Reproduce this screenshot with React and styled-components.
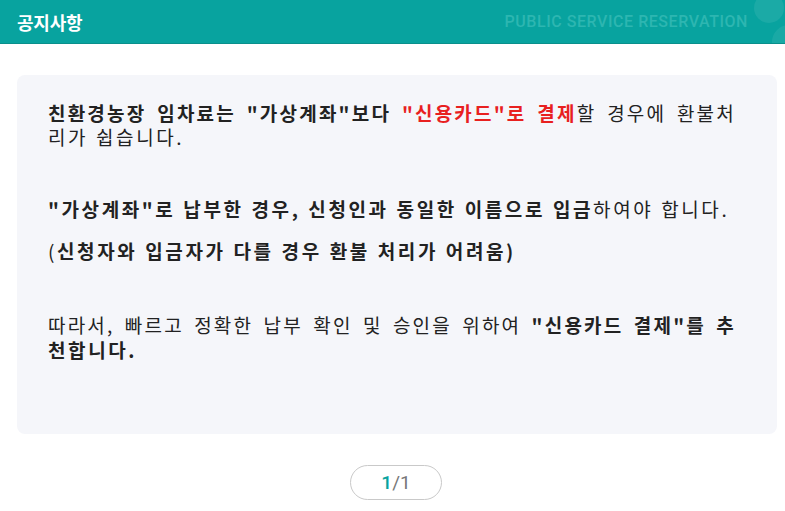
import React from 'react';
import styled, { createGlobalStyle } from 'styled-components';

const GlobalStyle = createGlobalStyle`
    html, body {
        margin: 0;
        padding: 0;
        background: #ffffff;
    }
    body {
        font-family: "Noto Sans CJK KR", "Noto Sans", sans-serif;
        color: #222;
    }
`

const Page = styled.div`
    width: 785px;
    height: 511px;
    overflow: hidden;
    display: flex;
    flex-direction: column;
`

const Header = styled.header`
    position: relative;
    height: 43px;
    background: #08a39f;
    border-bottom: 1px solid #0a8f8b;
    display: flex;
    align-items: center;
    justify-content: space-between;
    padding: 0 0 0 17px;
    overflow: hidden;
`

const Title = styled.h1`
    margin: 0;
    font-size: 18px;
    font-weight: 700;
    color: #ffffff;
    letter-spacing: -0.2px;
`

const Watermark = styled.span`
    font-family: Roboto, "Liberation Sans", sans-serif;
    font-size: 16px;
    font-weight: 500;
    color: #2db6b1;
    margin-right: 37px;
    letter-spacing: 0.55px;
`

const Blob = styled.svg`
    position: absolute;
    right: 0;
    top: 0;
`

const Body = styled.main`
    flex: 1;
    display: flex;
    flex-direction: column;
    align-items: center;
    padding: 31px 8px 0 17px;
`

const Card = styled.section`
    align-self: stretch;
    height: 359px;
    box-sizing: border-box;
    background: #f5f6fa;
    border-radius: 8px;
    padding: 26px 30px 0 31px;
    font-size: 19px;
    line-height: 24px;
    letter-spacing: 2.6px;
    word-spacing: 1px;
`

const Para = styled.p`
    margin: 0 0 ${p => p.gap || 0}px;
    line-height: ${p => p.lh || 24}px;
`

// a wrapped line that runs out to the right edge, as in the original justified text
const FullLine = styled.span`
    display: block;
    margin-right: 11px;
    text-align: justify;
    text-align-last: justify;
    letter-spacing: 2.2px;
`

const Strong = styled.b`
    font-weight: 700;
    color: ${p => (p.red ? '#e8201f' : '#222')};
`

const Pager = styled.div`
    margin-top: 31px;
    margin-left: -2px;
    width: 92px;
    height: 35px;
    box-sizing: border-box;
    border: 1px solid #c9c9c9;
    border-radius: 18px;
    display: flex;
    align-items: center;
    justify-content: center;
    font-family: Roboto, "Liberation Sans", sans-serif;
    font-size: 19px;
    color: #777;
`

const Current = styled.span`
    color: #08a39f;
    font-weight: 500;
`

function App() {
    return (
        <Page>
            <GlobalStyle />
            <Header>
                <Title>공지사항</Title>
                <Watermark>PUBLIC SERVICE RESERVATION</Watermark>
                <Blob width="60" height="44" viewBox="0 0 60 44">
                    <circle cx="44" cy="8" r="15" fill="#ffffff" opacity="0.08" />
                    <circle cx="64" cy="42" r="17" fill="#ffffff" opacity="0.07" />
                </Blob>
            </Header>
            <Body>
                <Card>
                    <Para gap={48}>
                        <FullLine>
                            <Strong>친환경농장 임차료는 "가상계좌"보다 </Strong>
                            <Strong red>"신용카드"로 결제</Strong>할 경우에 환불처
                        </FullLine>
                        리가 쉽습니다.
                    </Para>
                    <Para gap={18}>
                        <Strong>"가상계좌"로 납부한 경우, 신청인과 동일한 이름으로 입금</Strong>하여야 합니다.
                    </Para>
                    <Para gap={49}>
                        (<Strong>신청자와 입금자가 다를 경우 환불 처리가 어려움)</Strong>
                    </Para>
                    <Para lh={25}>
                        <FullLine>
                            따라서, 빠르고 정확한 납부 확인 및 승인을 위하여 <Strong>"신용카드 결제"를 추</Strong>
                        </FullLine>
                        <Strong>천합니다.</Strong>
                    </Para>
                </Card>
                <Pager>
                    <Current>1</Current>/1
                </Pager>
            </Body>
        </Page>
    );
}

export default App;
